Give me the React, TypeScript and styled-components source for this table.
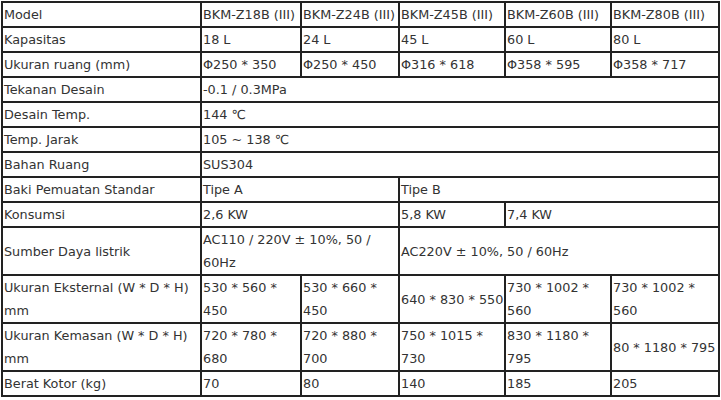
import React from "react";
import styled, { createGlobalStyle } from "styled-components";

const GlobalStyle = createGlobalStyle`
  body {
    margin: 0;
    background: #ffffff;
  }
`;

const Page = styled.div`
  padding: 1px 0 0 1px;
`;

const SpecTable = styled.table`
  width: 717px;
  table-layout: fixed;
  border-collapse: collapse;
  font-family: "DejaVu Sans", Verdana, sans-serif;
  font-size: 12.8px;
  color: #333333;
`;

const Cell = styled.td<{ $lines?: number; $nowrap?: boolean }>`
  border: 2px solid #222222;
  padding: 0 0 0 1px;
  line-height: 23px;
  height: ${(p) => (p.$lines ?? 1) * 23}px;
  vertical-align: middle;
  white-space: ${(p) => (p.$nowrap ? "nowrap" : "normal")};
  overflow: hidden;
`;

type Row = {
  label: string;
  cells: { text: string; span?: number; nowrap?: boolean }[];
  lines?: number;
};

const models = [
  "BKM-Z18B (III)",
  "BKM-Z24B (III)",
  "BKM-Z45B (III)",
  "BKM-Z60B (III)",
  "BKM-Z80B (III)",
];

const rows: Row[] = [
  { label: "Model", cells: models.map((m) => ({ text: m, nowrap: true })) },
  {
    label: "Kapasitas",
    cells: ["18 L", "24 L", "45 L", "60 L", "80 L"].map((t) => ({ text: t })),
  },
  {
    label: "Ukuran ruang (mm)",
    cells: [
      "Φ250 * 350",
      "Φ250 * 450",
      "Φ316 * 618",
      "Φ358 * 595",
      "Φ358 * 717",
    ].map((t) => ({ text: t, nowrap: true })),
  },
  { label: "Tekanan Desain", cells: [{ text: "-0.1 / 0.3MPa", span: 5 }] },
  { label: "Desain Temp.", cells: [{ text: "144 ℃", span: 5 }] },
  { label: "Temp. Jarak", cells: [{ text: "105 ~ 138 ℃", span: 5 }] },
  { label: "Bahan Ruang", cells: [{ text: "SUS304", span: 5 }] },
  {
    label: "Baki Pemuatan Standar",
    cells: [
      { text: "Tipe A", span: 2 },
      { text: "Tipe B", span: 3 },
    ],
  },
  {
    label: "Konsumsi",
    cells: [
      { text: "2,6 KW", span: 2 },
      { text: "5,8 KW" },
      { text: "7,4 KW", span: 2 },
    ],
  },
  {
    label: "Sumber Daya listrik",
    lines: 2,
    cells: [
      { text: "AC110 / 220V ± 10%, 50 / 60Hz", span: 2 },
      { text: "AC220V ± 10%, 50 / 60Hz", span: 3 },
    ],
  },
  {
    label: "Ukuran Eksternal (W * D * H) mm",
    lines: 2,
    cells: [
      { text: "530 * 560 * 450" },
      { text: "530 * 660 * 450" },
      { text: "640 * 830 * 550", nowrap: true },
      { text: "730 * 1002 * 560" },
      { text: "730 * 1002 * 560" },
    ],
  },
  {
    label: "Ukuran Kemasan (W * D * H) mm",
    lines: 2,
    cells: [
      { text: "720 * 780 * 680" },
      { text: "720 * 880 * 700" },
      { text: "750 * 1015 * 730" },
      { text: "830 * 1180 * 795" },
      { text: "80 * 1180 * 795", nowrap: true },
    ],
  },
  {
    label: "Berat Kotor (kg)",
    cells: ["70", "80", "140", "185", "205"].map((t) => ({ text: t })),
  },
];

const widths = [199, 100, 98, 106, 106, 108];

export default function App() {
  return (
    <Page>
      <GlobalStyle />
      <SpecTable>
        <colgroup>
          {widths.map((w, i) => (
            <col key={i} style={{ width: w }} />
          ))}
        </colgroup>
        <tbody>
          {rows.map((r) => (
            <tr key={r.label}>
              <Cell $lines={r.lines}>{r.label}</Cell>
              {r.cells.map((c, i) => (
                <Cell key={i} colSpan={c.span} $nowrap={c.nowrap}>
                  {c.text}
                </Cell>
              ))}
            </tr>
          ))}
        </tbody>
      </SpecTable>
    </Page>
  );
}
